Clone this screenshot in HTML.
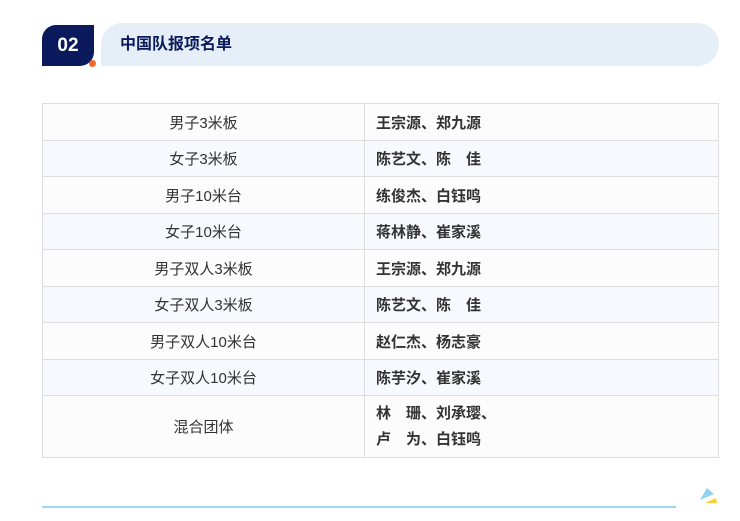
<!DOCTYPE html><html><head><meta charset="utf-8"><style>
body{margin:0;width:740px;height:521px;background:#fff;position:relative;font-family:"Liberation Sans","Noto Sans CJK SC",sans-serif;overflow:hidden}
.badge{position:absolute;left:42px;top:25px;width:52px;height:41px;background:#0b1a5c;border-radius:14px 0 14px 0;color:#fff;font-weight:bold;font-size:19px;line-height:41px;text-align:center}
.dot{position:absolute;left:89px;top:60px;width:7px;height:7px;border-radius:50%;background:#f26a21}
.banner{position:absolute;left:101px;top:23px;width:618px;height:43px;background:#e6eef7;border-radius:22px 22px 22px 0}
.banner span{position:absolute;left:19px;top:0;line-height:43px;font-size:16px;font-weight:bold;color:#0b1a5c}
table{position:absolute;left:42px;top:103px;width:677px;border-collapse:collapse;font-size:15px;color:#333}
td{border:1px solid #ddd;padding:0}
td.a{width:321px;text-align:center}
td.b{padding-left:11px;font-weight:bold}
tr:nth-child(even) td{background:#f6f9fe}
tr:nth-child(odd) td{background:#fcfcfc}
.line{position:absolute;left:42px;top:506px;width:634px;height:2px;background:#9dd7f0}
</style></head><body>
<div class="badge">02</div><div class="dot"></div>
<div class="banner"><span>中国队报项名单</span></div>
<table>
<tr style="height:37px"><td class="a">男子3米板</td><td class="b">王宗源、郑九源</td></tr>
<tr style="height:36px"><td class="a">女子3米板</td><td class="b">陈艺文、陈　佳</td></tr>
<tr style="height:37px"><td class="a">男子10米台</td><td class="b">练俊杰、白钰鸣</td></tr>
<tr style="height:36px"><td class="a">女子10米台</td><td class="b">蒋林静、崔家溪</td></tr>
<tr style="height:37px"><td class="a">男子双人3米板</td><td class="b">王宗源、郑九源</td></tr>
<tr style="height:36px"><td class="a">女子双人3米板</td><td class="b">陈艺文、陈　佳</td></tr>
<tr style="height:37px"><td class="a">男子双人10米台</td><td class="b">赵仁杰、杨志豪</td></tr>
<tr style="height:36px"><td class="a">女子双人10米台</td><td class="b">陈芋汐、崔家溪</td></tr>
<tr style="height:62px"><td class="a">混合团体</td><td class="b" style="line-height:26px">林　珊、刘承璎、<br>卢　为、白钰鸣</td></tr>
</table>
<div class="line"></div>
<svg style="position:absolute;left:698px;top:486px" width="24" height="20"><polygon points="9,2 16,8 2,14" fill="#8fd3f4"/><polygon points="7,17 18,12 19,17" fill="#ffd233"/></svg>
</body></html>
